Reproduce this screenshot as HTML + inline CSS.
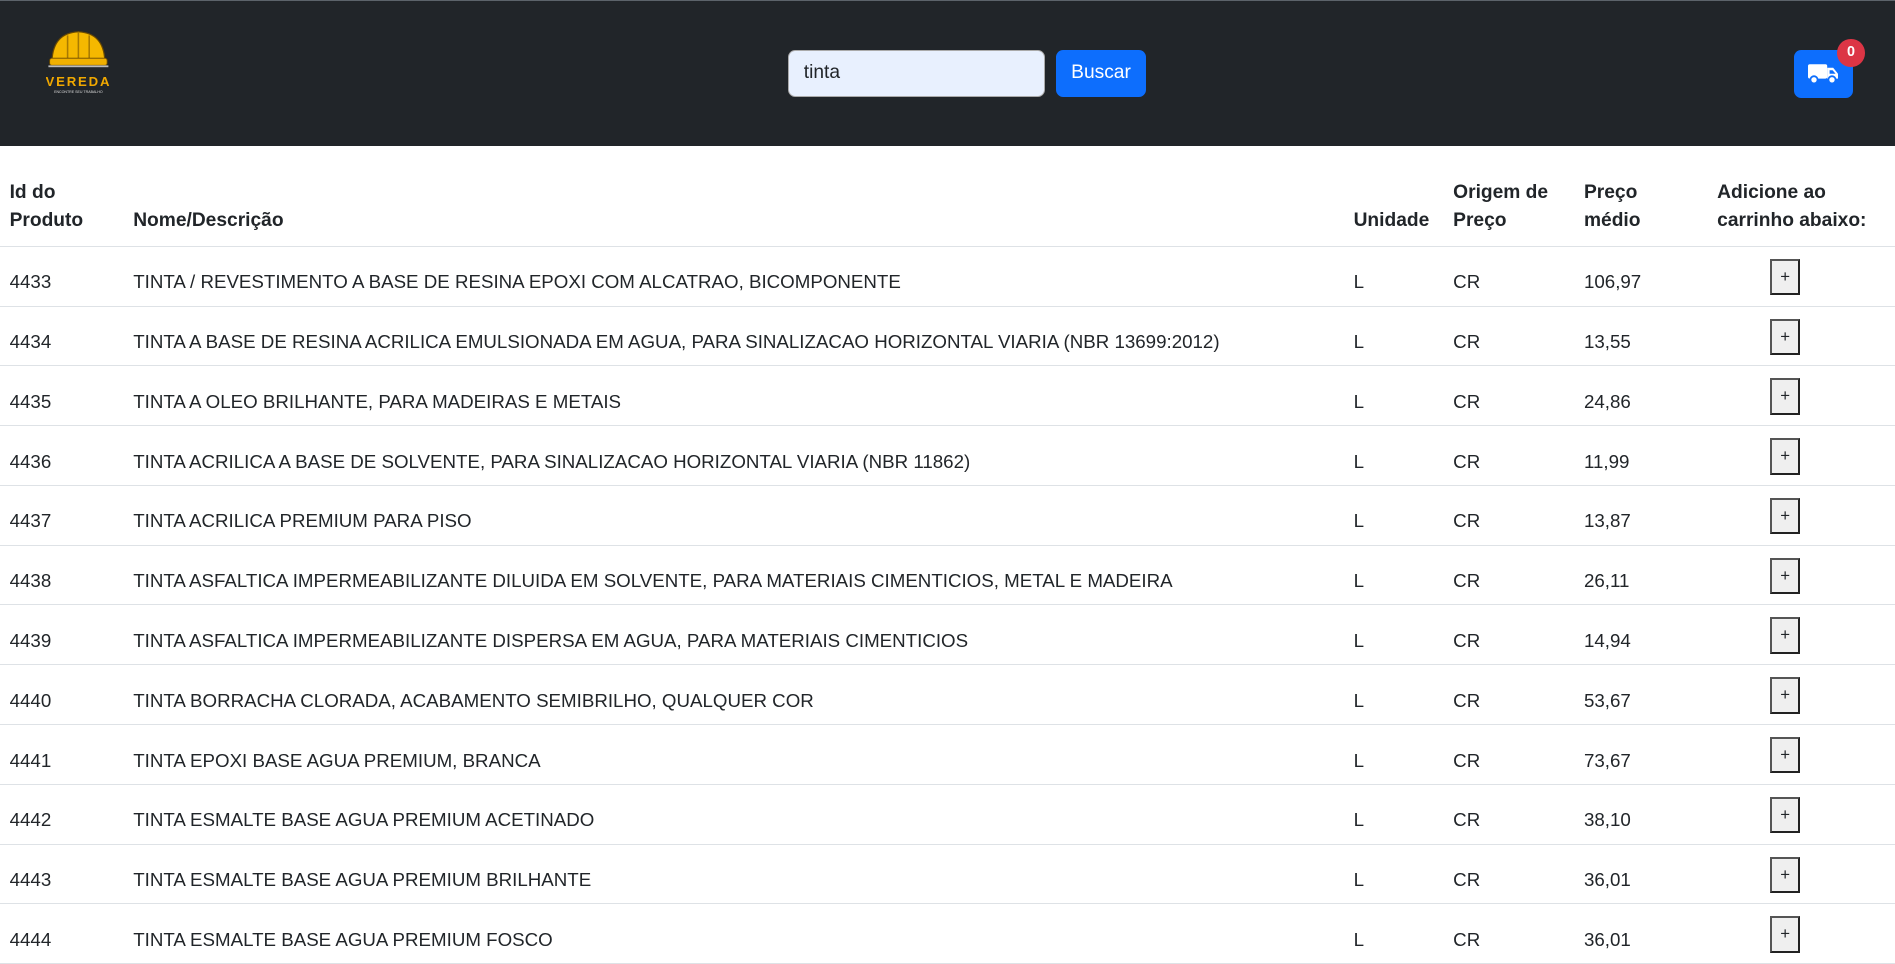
<!DOCTYPE html>
<html><head><meta charset="utf-8"><style>
html{zoom:1.2}
body{margin:0;font-family:"Liberation Sans",sans-serif;color:#212529;background:#fff;width:1579px;overflow:hidden}
.hdr{height:121px;background:#212529;border-top:1px solid #5c636a;position:relative}
.inp{position:absolute;left:657px;top:41px;width:200px;height:37px;background:#e8f0fe;border:1px solid #aaa;border-radius:6px;font-size:16px;line-height:37px;padding-left:12px;box-sizing:content-box}
.btn{position:absolute;left:880px;top:41px;width:75px;height:39px;background:#0d6efd;border-radius:6px;color:#fff;font-size:16px;line-height:39px;text-align:center}
.cart{position:absolute;left:1495px;top:41px;width:49px;height:40px;background:#0d6efd;border-radius:6px}
.badge{position:absolute;left:1531px;top:32px;width:23px;height:23px;border-radius:50%;background:#dc3545;color:#fff;font-weight:bold;font-size:12px;line-height:23px;text-align:center}
table{border-collapse:collapse;width:1579px;font-size:15.6px;line-height:24px;table-layout:fixed}
th{text-align:left;vertical-align:bottom;padding:27px 8px 8px;border-bottom:1px solid #dee2e6;font-weight:bold;font-size:16px}
td{padding:18px 8px 0;height:31px;border-bottom:1px solid #dee2e6;vertical-align:top;white-space:nowrap}
.pl{display:inline-block;position:relative;top:-8px;width:22px;height:27px;border:2px solid #222;border-top-color:#555;border-left-color:#555;background:#efefef;text-align:center;line-height:27px;font-size:14px;margin-left:44px}
</style></head><body>
<div class="hdr">
<svg style="position:absolute;left:38px;top:22px" width="56" height="60" viewBox="0 0 56 60">
<path d="M5 28 Q6 5 27 4 Q48 5 49 28 Z" fill="#f5b800" stroke="#6b4a00" stroke-width="1"/>
<path d="M18 28 V7 M27 28 V4 M36 28 V7" stroke="#a87a00" stroke-width="1.3"/>
<rect x="3" y="26" width="48" height="6" rx="2" fill="#f0b000" stroke="#6b4a00" stroke-width=".8"/>
<rect x="2" y="32" width="50" height="1.5" fill="#bbb"/>
<text x="27" y="49" text-anchor="middle" font-family="Liberation Sans" font-weight="bold" font-size="11" fill="#f0a800" letter-spacing="1.5">VEREDA</text>
<text x="27" y="55" text-anchor="middle" font-family="Liberation Sans" font-size="3" fill="#ddd">ENCONTRE SEU TRABALHO</text>
</svg>
<div class="inp">tinta</div>
<div class="btn">Buscar</div>
<div class="cart"><svg style="position:absolute;left:12px;top:11px" width="26" height="18" viewBox="0 0 26 18"><rect x="0" y="1" width="16" height="12" rx="1.5" fill="#fff"/><path d="M16 4 H21 L25 9 V13 H16 Z" fill="#fff"/><path d="M18 6 H20.5 L23 9 H18Z" fill="#0d6efd"/><circle cx="5" cy="14" r="3" fill="#fff" stroke="#0d6efd" stroke-width="1.5"/><circle cx="20" cy="14" r="3" fill="#fff" stroke="#0d6efd" stroke-width="1.5"/></svg></div>
<div class="badge">0</div>
</div>
<table>
<colgroup><col style="width:103px"><col style="width:1017px"><col style="width:83px"><col style="width:109px"><col style="width:111px"><col></colgroup>
<tr><th>Id do<br>Produto</th><th>Nome/Descrição</th><th>Unidade</th><th>Origem de<br>Preço</th><th>Preço<br>médio</th><th>Adicione ao<br>carrinho abaixo:</th></tr>
<tr><td>4433</td><td>TINTA / REVESTIMENTO A BASE DE RESINA EPOXI COM ALCATRAO, BICOMPONENTE</td><td>L</td><td>CR</td><td>106,97</td><td><span class="pl">+</span></td></tr>
<tr><td>4434</td><td>TINTA A BASE DE RESINA ACRILICA EMULSIONADA EM AGUA, PARA SINALIZACAO HORIZONTAL VIARIA (NBR 13699:2012)</td><td>L</td><td>CR</td><td>13,55</td><td><span class="pl">+</span></td></tr>
<tr><td>4435</td><td>TINTA A OLEO BRILHANTE, PARA MADEIRAS E METAIS</td><td>L</td><td>CR</td><td>24,86</td><td><span class="pl">+</span></td></tr>
<tr><td>4436</td><td>TINTA ACRILICA A BASE DE SOLVENTE, PARA SINALIZACAO HORIZONTAL VIARIA (NBR 11862)</td><td>L</td><td>CR</td><td>11,99</td><td><span class="pl">+</span></td></tr>
<tr><td>4437</td><td>TINTA ACRILICA PREMIUM PARA PISO</td><td>L</td><td>CR</td><td>13,87</td><td><span class="pl">+</span></td></tr>
<tr><td>4438</td><td>TINTA ASFALTICA IMPERMEABILIZANTE DILUIDA EM SOLVENTE, PARA MATERIAIS CIMENTICIOS, METAL E MADEIRA</td><td>L</td><td>CR</td><td>26,11</td><td><span class="pl">+</span></td></tr>
<tr><td>4439</td><td>TINTA ASFALTICA IMPERMEABILIZANTE DISPERSA EM AGUA, PARA MATERIAIS CIMENTICIOS</td><td>L</td><td>CR</td><td>14,94</td><td><span class="pl">+</span></td></tr>
<tr><td>4440</td><td>TINTA BORRACHA CLORADA, ACABAMENTO SEMIBRILHO, QUALQUER COR</td><td>L</td><td>CR</td><td>53,67</td><td><span class="pl">+</span></td></tr>
<tr><td>4441</td><td>TINTA EPOXI BASE AGUA PREMIUM, BRANCA</td><td>L</td><td>CR</td><td>73,67</td><td><span class="pl">+</span></td></tr>
<tr><td>4442</td><td>TINTA ESMALTE BASE AGUA PREMIUM ACETINADO</td><td>L</td><td>CR</td><td>38,10</td><td><span class="pl">+</span></td></tr>
<tr><td>4443</td><td>TINTA ESMALTE BASE AGUA PREMIUM BRILHANTE</td><td>L</td><td>CR</td><td>36,01</td><td><span class="pl">+</span></td></tr>
<tr><td>4444</td><td>TINTA ESMALTE BASE AGUA PREMIUM FOSCO</td><td>L</td><td>CR</td><td>36,01</td><td><span class="pl">+</span></td></tr>
</table>
</body></html>
